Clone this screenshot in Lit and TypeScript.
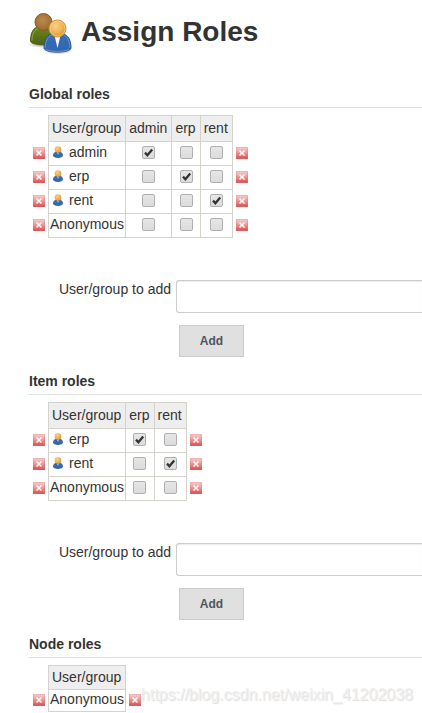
import { LitElement, html, css, svg, nothing } from "lit";
import { customElement, property } from "lit/decorators.js";

interface Row {
  name: string;
  user: boolean;
  granted: string[];
}

interface Section {
  id: string;
  title: string;
  roles: string[];
  rows: Row[];
  addable: boolean;
}

const user = (name: string): Row => ({ name, user: true, granted: [name] });
const anonymous: Row = { name: "Anonymous", user: false, granted: [] };

const sections: Section[] = [
  {
    id: "global",
    title: "Global roles",
    roles: ["admin", "erp", "rent"],
    rows: [user("admin"), user("erp"), user("rent"), anonymous],
    addable: true,
  },
  {
    id: "item",
    title: "Item roles",
    roles: ["erp", "rent"],
    rows: [user("erp"), user("rent"), anonymous],
    addable: true,
  },
  { id: "node", title: "Node roles", roles: [], rows: [anonymous], addable: false },
];

const gradients = svg`
  <defs>
    <radialGradient id="head" cx="0.4" cy="0.35" r="0.7">
      <stop offset="0" stop-color="#fbd08a" />
      <stop offset="0.6" stop-color="#eeb050" />
      <stop offset="1" stop-color="#d38f2c" />
    </radialGradient>
    <radialGradient id="dark" cx="0.45" cy="0.4" r="0.7">
      <stop offset="0" stop-color="#bd8a4e" />
      <stop offset="1" stop-color="#946628" />
    </radialGradient>
    <linearGradient id="blue" x1="0" y1="0" x2="0" y2="1">
      <stop offset="0" stop-color="#3a6db3" />
      <stop offset="1" stop-color="#2f66b0" />
    </linearGradient>
    <linearGradient id="green" x1="0" y1="0" x2="0" y2="1">
      <stop offset="0" stop-color="#6d8424" />
      <stop offset="1" stop-color="#4d6410" />
    </linearGradient>
    <radialGradient id="shade">
      <stop offset="0" stop-color="#000" stop-opacity="0.4" />
      <stop offset="1" stop-color="#000" stop-opacity="0" />
    </radialGradient>
  </defs>
`;

@customElement("role-section")
export class RoleSection extends LitElement {
  @property({ attribute: false }) section!: Section;

  static styles = css`
    :host {
      display: block;
    }
    .title {
      margin: 0;
      padding-bottom: 4px;
      border-bottom: 1px solid #dddddd;
      font-size: 14px;
      line-height: 18px;
      font-weight: bold;
    }
    .matrix {
      margin-top: 7px;
      border-collapse: collapse;
    }
    .head,
    .cell {
      border: 1px solid #d3d3cb;
      font-weight: normal;
      line-height: 18px;
      text-align: center;
    }
    .head {
      height: 26px;
      padding: 0 4px 1px 3px;
      box-sizing: border-box;
      background: #eeeeee;
    }
    .cell {
      height: 20px;
      padding: 0 0 3px;
    }
    .compact .head {
      height: 24px;
    }
    .compact .cell {
      height: 18px;
    }
    .cell.name {
      padding: 0 1px 3px;
      text-align: left;
    }
    .who {
      display: flex;
      align-items: center;
      gap: 5px;
    }
    .person {
      display: block;
      width: 12px;
      height: 12px;
      margin-left: 2px;
    }
    .edge {
      padding: 0 3px 2px;
    }
    .edge:first-child {
      padding-left: 4px;
    }
    .remove {
      display: block;
      width: 12px;
      height: 12px;
      padding: 0;
      border: 0;
      background: none;
    }
    .cross {
      display: block;
    }
    .tick {
      appearance: none;
      display: block;
      width: 13px;
      height: 13px;
      box-sizing: border-box;
      margin: 0 auto;
      border: 1px solid #b0b0b0;
      border-radius: 2px;
      background: linear-gradient(#e6e6e6, #dcdcdc);
    }
    .tick:checked {
      background:
        url('data:image/svg+xml,<svg xmlns="http://www.w3.org/2000/svg" viewBox="0 0 11 11"><path d="M2 5.6 4.4 8.2 9.2 2.4" fill="none" stroke="%23333" stroke-width="2.3"/></svg>'),
        linear-gradient(#e6e6e6, #dcdcdc);
    }
    .form {
      display: grid;
      grid-template-columns: 142px 1fr;
      column-gap: 5px;
      row-gap: 12px;
      margin-top: 42px;
      padding-bottom: 15px;
    }
    .label {
      line-height: 18px;
      text-align: right;
    }
    .field {
      width: 100%;
      height: 33px;
      box-sizing: border-box;
      padding: 0 6px;
      border: 1px solid #cccccc;
      border-right: 0;
      border-radius: 3px 0 0 3px;
      background: #ffffff;
      box-shadow: inset 0 1px 1px rgba(0, 0, 0, 0.08);
      font: inherit;
    }
    .add {
      grid-column: 2;
      justify-self: start;
      width: 65px;
      height: 32px;
      margin-left: 3px;
      padding: 0;
      border: 1px solid #cccccc;
      background: #e0e0e0;
      color: #4d545d;
      font: bold 12px "Liberation Sans", Arial, sans-serif;
    }
  `;

  private remove(name: string) {
    return html`<td class="edge">
      <button class="remove" type="button" aria-label="Remove ${name}">
        <svg class="cross" width="12" height="12" viewBox="0 0 12 12">
          <defs>
            <linearGradient id="red" x1="0" y1="0" x2="0" y2="1">
              <stop offset="0" stop-color="#f6cccc" />
              <stop offset="0.5" stop-color="#ea9494" />
              <stop offset="1" stop-color="#dc4f4f" />
            </linearGradient>
            <linearGradient id="rim" x1="0" y1="0" x2="0" y2="1">
              <stop offset="0" stop-color="#efb4b4" />
              <stop offset="1" stop-color="#dc5c5c" />
            </linearGradient>
          </defs>
          <rect x="0.5" y="0.5" width="11" height="11" fill="url(#red)" stroke="url(#rim)" />
          <path d="M3.500 3.500 8.500 8.500M8.500 3.500 3.500 8.500" stroke="#fff" stroke-opacity="0.9" stroke-width="1.700" />
        </svg>
      </button>
    </td>`;
  }

  private person() {
    return html`<svg class="person" viewBox="0 0 12 12" aria-hidden="true">
      ${gradients}
      <path d="M1 9.500C1 7 3 5.500 6 5.500s5 1.500 5 4c0 3.200-10 3.200-10 0z" fill="url(#blue)" />
      <path d="M5.200 6.500h1.600L6 9z" fill="#e8eef8" />
      <circle cx="6" cy="3.500" r="3.300" fill="url(#head)" />
    </svg>`;
  }

  render() {
    const { id, title, roles, rows, addable } = this.section;
    return html`
      <h2 class="title">${title}</h2>
      <table class="matrix ${roles.length ? "" : "compact"}">
        <tr>
          <td></td>
          <th class="head" scope="col">User/group</th>
          ${roles.map((role) => html`<th class="head" scope="col">${role}</th>`)}
        </tr>
        ${rows.map(
          (row) => html`<tr>
            ${this.remove(row.name)}
            <td class="cell name">
              <span class="who">${row.user ? this.person() : nothing}${row.name}</span>
            </td>
            ${roles.map(
              (role) => html`<td class="cell">
                <input
                  class="tick"
                  type="checkbox"
                  aria-label="${row.name}: ${role}"
                  .checked=${row.granted.includes(role)}
                />
              </td>`,
            )}
            ${this.remove(row.name)}
          </tr>`,
        )}
      </table>
      ${addable
        ? html`<form class="form" @submit=${(e: Event) => e.preventDefault()}>
            <label class="label" for="${id}-add">User/group to add</label>
            <input class="field" id="${id}-add" type="text" />
            <button class="add" type="button">Add</button>
          </form>`
        : nothing}
    `;
  }
}

@customElement("app-root")
export class AppRoot extends LitElement {
  static styles = css`
    :host {
      display: block;
      position: relative;
      padding: 8px 0 1px 29px;
      background: #ffffff;
      color: #333333;
      font: 14px "Liberation Sans", Arial, sans-serif;
    }
    .banner {
      display: flex;
      align-items: center;
      gap: 4px;
      margin-bottom: 29px;
    }
    .group {
      display: block;
      flex: none;
    }
    .heading {
      margin: 0;
      font-size: 28px;
      line-height: 32px;
      font-weight: bold;
    }
    .source {
      position: absolute;
      right: 9px;
      bottom: 8px;
      color: #f0f0f0;
      font-size: 16px;
      line-height: 20px;
      text-shadow: 1px 1px 1px #dcdcdc;
      white-space: nowrap;
    }
  `;

  render() {
    return html`
      <header class="banner">
        <svg class="group" width="48" height="48" viewBox="0 0 48 48" aria-hidden="true">
          ${gradients}
          <ellipse cx="13" cy="36.500" rx="14" ry="3.500" fill="url(#shade)" />
          <path d="M1.500 33C1.500 24 5 19.500 9 19h12c4 1 6 6 6 14 0 5-25.500 5-25.500 0z" fill="url(#green)" stroke="#4a5f12" />
          <path d="M3 32.500C3 25 6 21 9.500 20.500" fill="none" stroke="#8fa64b" />
          <circle cx="14.500" cy="14" r="8.500" fill="url(#dark)" stroke="#865a20" />
          <ellipse cx="29" cy="43" rx="15" ry="3.500" fill="url(#shade)" />
          <path d="M15 40c0-8 3-13 7-14h12c5 1 8 6 8 14 0 5.500-27 5.500-27 0z" fill="url(#blue)" stroke="#285596" />
          <path d="M16.200 40c0-7 3-12 6.500-13M40.800 40c0-7-3-12-6.500-13M17 41.500c5 2.500 18 2.500 23 0" fill="none" stroke="#6792cc" />
          <path d="M25.500 27.500h6L28.500 40z" fill="#f4f6fa" />
          <circle cx="28.500" cy="20.500" r="8.500" fill="url(#head)" stroke="#d08e2e" />
          <circle cx="28.500" cy="20.500" r="7.500" fill="none" stroke="#ffd899" stroke-opacity="0.6" />
        </svg>
        <h1 class="heading">Assign Roles</h1>
      </header>
      ${sections.map((section) => html`<role-section .section=${section}></role-section>`)}
      <span class="source">https://blog.csdn.net/weixin_41202038</span>
    `;
  }
}
